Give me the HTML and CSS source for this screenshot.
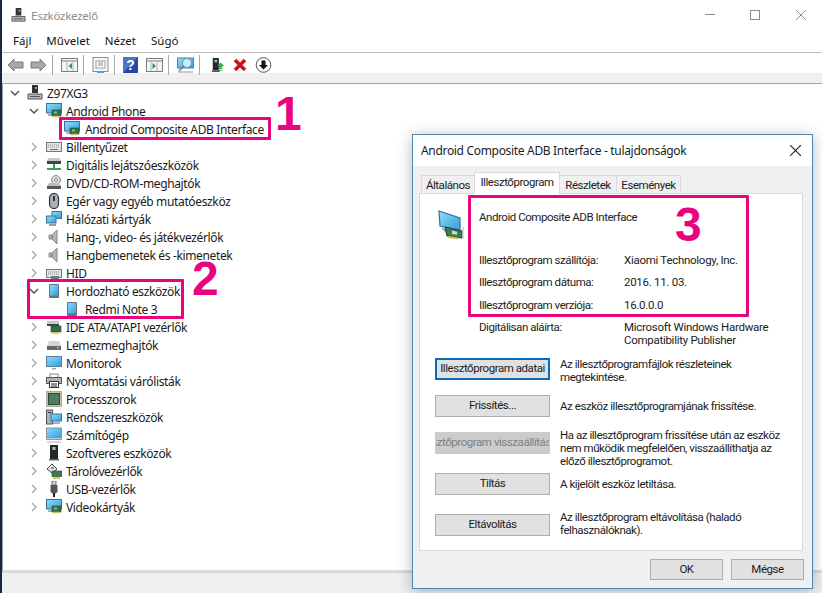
FILE: index.html
```html
<!DOCTYPE html>
<html lang="hu">
<head>
<meta charset="utf-8">
<title>Eszközkezelő</title>
<link rel="stylesheet" href="styles.css">
</head>
<body>
<svg class="defs" width="0" height="0" aria-hidden="true">
  <defs>
    <linearGradient id="blue" x1="0" y1="0" x2="1" y2="1"><stop offset="0" stop-color="#8fdcff"/><stop offset="1" stop-color="#2f9fdc"/></linearGradient>
    <symbol id="down" viewBox="0 0 10 10"><path d="M1 3l4 4 4-4" fill="none" stroke="#4d4d4d" stroke-width="1.4"/></symbol>
    <symbol id="right" viewBox="0 0 10 10"><path d="M3 1l4 4-4 4" fill="none" stroke="#a8a8a8" stroke-width="1.4"/></symbol>
    <symbol id="computer" viewBox="0 0 16 16"><rect x="5" y="0" width="6" height="8" fill="#333"/><rect x="8" y="2" width="2" height="2" fill="#6fbf5f"/><path d="M1 9h14v5H1z" fill="#b9b9b9" stroke="#555"/><rect x="3" y="11" width="10" height="1" fill="#555"/></symbol>
    <symbol id="netcard" viewBox="0 0 16 16"><rect x=".5" y=".5" width="15" height="9.5" fill="url(#blue)" stroke="#41708f"/><path d="M2 12h5" stroke="#8a9aa5" stroke-width="1.5"/><rect x="6" y="7" width="9" height="6" fill="#2f6f4a" stroke="#1e4a30" stroke-width=".6"/><rect x="8" y="8.500" width="3" height="2" fill="#88b898"/><path d="M7 13.500h6" stroke="#d8c44a" stroke-width="1.600"/></symbol>
    <symbol id="netcard-big" viewBox="0 0 32 32"><path d="M4 2l21 7v12L5 17z" fill="url(#blue)" stroke="#3f6f8d" stroke-width="1.200"/><path d="M7 19l6 5" stroke="#9aa8b2" stroke-width="2"/><path d="M10 18l17 4v7l-15-2z" fill="#3f7a58" stroke="#223f2f"/><path d="M17 21.500l5 1.200v3l-5-.8z" fill="#c9d9cf"/><path d="M13 28l10 1.500" stroke="#d8c44a" stroke-width="2"/><path d="M28 18v12" stroke="#c5ccd2" stroke-width="1.500"/></symbol>
    <symbol id="keyboard" viewBox="0 0 16 16"><rect x=".5" y="3.500" width="15" height="9" fill="#e4e4e4" stroke="#777"/><path d="M2 6h12M2 8h12" stroke="#8f8f8f" stroke-dasharray="1 1"/><path d="M4 10.500h8" stroke="#777"/></symbol>
    <symbol id="media" viewBox="0 0 16 16"><path d="M2 1h12l1 3H1z" fill="#c9c9c9"/><rect x="1" y="4" width="14" height="3" fill="#444"/><rect x="7" y="7" width="2" height="4" fill="#3aa24b"/><rect x="1" y="11" width="14" height="2" fill="#3aa24b"/></symbol>
    <symbol id="dvd" viewBox="0 0 16 16"><circle cx="10" cy="5" r="4.500" fill="#dcdcdc" stroke="#8a8a8a"/><circle cx="10" cy="5" r="1.500" fill="#fff" stroke="#8a8a8a"/><path d="M3 8h10l2 3H1z" fill="#bdbdbd"/><rect x="1" y="11" width="14" height="3" fill="#555"/></symbol>
    <symbol id="mouse" viewBox="0 0 16 16"><rect x="3.500" y=".5" width="9" height="15" rx="4.500" fill="#a9b1b8" stroke="#333" stroke-width="1.200"/><rect x="7" y="3" width="2" height="5" fill="#33373b"/></symbol>
    <symbol id="network" viewBox="0 0 16 16"><rect x="6" y=".5" width="9.500" height="7" fill="url(#blue)" stroke="#41708f"/><rect x=".5" y="5" width="9.500" height="7" fill="url(#blue)" stroke="#41708f"/><path d="M3 14h7" stroke="#6d7f8c" stroke-width="1.500"/></symbol>
    <symbol id="speaker" viewBox="0 0 16 16"><path d="M3 6h3l5-5v14l-5-5H3z" fill="#b5b5b5" stroke="#8a8a8a"/><path d="M6 6.500v3" stroke="#666"/></symbol>
    <symbol id="hid" viewBox="0 0 16 16"><rect x=".5" y="4.500" width="15" height="8" fill="#e4e4e4" stroke="#777"/><path d="M2 7h12M2 9h12" stroke="#8f8f8f" stroke-dasharray="1 1"/><rect x="5" y="11" width="8" height="4" fill="#6b7a88"/></symbol>
    <symbol id="phone" viewBox="0 0 16 16"><rect x="3" y="1" width="10" height="14" rx="1" fill="#66727c"/><rect x="4" y="2" width="8" height="10.500" fill="url(#blue)"/></symbol>
    <symbol id="ide" viewBox="0 0 16 16"><rect x="1" y="2" width="12" height="4" fill="#c9c9c9"/><rect x="1" y="5" width="12" height="2" fill="#444"/><rect x="5" y="7" width="10" height="6" fill="#2f6f4a" stroke="#1e4a30" stroke-width=".6"/><path d="M6 14h7" stroke="#d8c44a" stroke-width="1.600"/></symbol>
    <symbol id="disk" viewBox="0 0 16 16"><path d="M3 4h10l2 5H1z" fill="#d4d4d4"/><rect x="1" y="9" width="14" height="4" fill="#666"/><rect x="11" y="10" width="2" height="1.500" fill="#6fe06f"/></symbol>
    <symbol id="monitor" viewBox="0 0 16 16"><rect x=".5" y="1.500" width="15" height="10" fill="url(#blue)" stroke="#5b7f98"/><path d="M6 13h4v1.500H6z" fill="#9aa8b2"/></symbol>
    <symbol id="printer" viewBox="0 0 16 16"><rect x="4" y="1" width="8" height="4" fill="#fff" stroke="#888"/><rect x=".5" y="4.500" width="15" height="6" fill="#aeb4b8" stroke="#555"/><rect x="3.500" y="8.500" width="9" height="6" fill="#fff" stroke="#333"/><path d="M5 11h6M5 13h6" stroke="#222"/></symbol>
    <symbol id="cpu" viewBox="0 0 16 16"><rect x=".5" y=".5" width="15" height="15" fill="#c9c28f" stroke="#777" stroke-dasharray="1 1"/><rect x="2.500" y="2.500" width="11" height="11" fill="#4e7b62" stroke="#2c4a3a"/></symbol>
    <symbol id="system" viewBox="0 0 16 16"><rect x=".5" y="1" width="6" height="14" fill="#aeb4b8" stroke="#555"/><rect x="2" y="3" width="3" height="1" fill="#333"/><rect x="5" y="5" width="10.500" height="7" fill="url(#blue)" stroke="#41708f"/><path d="M7 14h7" stroke="#8a9aa5" stroke-width="1.500"/></symbol>
    <symbol id="pc" viewBox="0 0 16 16"><rect x=".5" y="1" width="15" height="10" fill="url(#blue)" stroke="#7b97aa"/><path d="M0 12.500h16" stroke="#8f9ca6"/><path d="M1 15h14" stroke="#b7c0c6" stroke-width="1.200"/></symbol>
    <symbol id="tower" viewBox="0 0 16 16"><rect x="4" y="0" width="8" height="14" fill="#24282b"/><rect x="6.500" y="2" width="3" height="3" fill="#8fd08a"/><rect x="3" y="14" width="10" height="1.500" fill="#666"/></symbol>
    <symbol id="storage" viewBox="0 0 16 16"><path d="M1 6l5-5 5 5-5 4z" fill="#e6e6e6" stroke="#444"/><path d="M5 5h3" stroke="#444"/><rect x="6" y="8" width="10" height="5.500" fill="#3c7a55" stroke="#1e4a30" stroke-width=".6"/><path d="M7 15h7" stroke="#d8c44a" stroke-width="1.800"/></symbol>
    <symbol id="usb" viewBox="0 0 16 16"><rect x="6" y="0" width="4" height="4" fill="#d8d8d8" stroke="#555" stroke-width=".8"/><path d="M4.500 4h7v7l-2 1.500h-3l-2-1.500z" fill="#55595c"/><rect x="7" y="12" width="2" height="4" fill="#222"/></symbol>
    <symbol id="prev" viewBox="0 0 17 14"><path d="M1 7l6-6v3h9v6H7v3z" fill="#a8a8a8" stroke="#7d7d7d"/></symbol>
    <symbol id="next" viewBox="0 0 17 14"><path d="M16 7l-6-6v3H1v6h9v3z" fill="#a8a8a8" stroke="#7d7d7d"/></symbol>
    <symbol id="tree-left" viewBox="0 0 17 14"><rect x=".5" y=".5" width="16" height="13" fill="#f4f4f4" stroke="#7d7d7d"/><path d="M1 3h15" stroke="#7d7d7d"/><path d="M6 3v10M12 3v10" stroke="#b5b5b5"/><path d="M11 5v6L7.500 8z" fill="#2f9b46"/></symbol>
    <symbol id="sheet" viewBox="0 0 17 16"><rect x="1" y=".5" width="15" height="14" fill="#f7f7f7" stroke="#8d8d8d"/><rect x="4" y="4" width="9" height="7" fill="#fff" stroke="#9a9a9a"/><path d="M6 6h5M6 8h5" stroke="#8d8d8d"/><rect x="5" y="14" width="7" height="2" fill="#49a7de"/></symbol>
    <symbol id="help" viewBox="0 0 15 16"><rect width="15" height="16" fill="#2a47a8"/><path d="M0 0h15L0 16z" fill="#4e73cf"/></symbol>
    <symbol id="tree-right" viewBox="0 0 17 14"><rect x=".5" y=".5" width="16" height="13" fill="#f4f4f4" stroke="#7d7d7d"/><path d="M1 3h15" stroke="#7d7d7d"/><path d="M5 3v10M11 3v10" stroke="#b5b5b5"/><path d="M6.500 5v6L10 8z" fill="#2f9b46"/></symbol>
    <symbol id="scan" viewBox="0 0 17 16"><rect x=".5" y="1" width="16" height="10" fill="url(#blue)" stroke="#5b7f98"/><path d="M1 15h15" stroke="#8f9ca6"/><circle cx="10" cy="6" r="4.500" fill="#c9ecfb" stroke="#7895a8"/><path d="M7 9l-5 5" stroke="#6f7a82" stroke-width="1.500"/></symbol>
    <symbol id="update" viewBox="0 0 16 16"><rect x="2" y="0" width="7" height="14" fill="#24282b"/><rect x="4" y="2" width="3" height="3" fill="#8fd08a"/><rect x="1" y="14" width="9" height="2" fill="#555"/><path d="M11 5l4 4h-2v2H9V9H7z" fill="#2fb34c"/><path d="M9 12h4M9 14h4" stroke="#2fb34c" stroke-width="1.200"/></symbol>
    <symbol id="remove" viewBox="0 0 14 14"><path d="M2 2l10 10M12 2L2 12" stroke="#c4161c" stroke-width="3.600"/></symbol>
    <symbol id="install" viewBox="0 0 16 16"><circle cx="8" cy="8" r="7.300" fill="#fff" stroke="#555"/><path d="M6 3.500h4V8h2.500L8 12.500 3.500 8H6z" fill="#111"/></symbol>
  </defs>
</svg>

<div class="app">
  <header class="titlebar">
    <svg class="title-icon"><use href="#computer"/></svg>
    <span class="title-text">Eszközkezelő</span>
    <div class="controls">
      <span class="ctl-min"></span>
      <span class="ctl-max"></span>
      <svg class="ctl-close" viewBox="0 0 10 10"><path d="M0 0l10 10M10 0L0 10" stroke="#8d8d8d"/></svg>
    </div>
  </header>
  <nav class="menu">
    <span>Fájl</span><span>Művelet</span><span>Nézet</span><span>Súgó</span>
  </nav>
  <div class="toolbar">
    <svg class="tool"><use href="#prev"/></svg>
    <svg class="tool"><use href="#next"/></svg>
    <i class="sep"></i>
    <svg class="tool"><use href="#tree-left"/></svg>
    <i class="sep"></i>
    <svg class="tool"><use href="#sheet"/></svg>
    <i class="sep"></i>
    <span class="help"><svg class="help-bg"><use href="#help"/></svg><b class="help-q">?</b></span>
    <svg class="tool"><use href="#tree-right"/></svg>
    <i class="sep"></i>
    <svg class="tool"><use href="#scan"/></svg>
    <i class="sep"></i>
    <svg class="tool tool-up"><use href="#update"/></svg>
    <svg class="tool tool-x"><use href="#remove"/></svg>
    <svg class="tool"><use href="#install"/></svg>
  </div>
  <main class="tree">
    <div class="row d0"><svg class="chev"><use href="#down"/></svg><svg class="ic"><use href="#computer"/></svg><span>Z97XG3</span></div>
    <div class="row d1"><svg class="chev"><use href="#down"/></svg><svg class="ic"><use href="#netcard"/></svg><span>Android Phone</span></div>
    <div class="row d2"><svg class="ic"><use href="#netcard"/></svg><span>Android Composite ADB Interface</span></div>
    <div class="row d1"><svg class="chev"><use href="#right"/></svg><svg class="ic"><use href="#keyboard"/></svg><span>Billentyűzet</span></div>
    <div class="row d1"><svg class="chev"><use href="#right"/></svg><svg class="ic"><use href="#media"/></svg><span>Digitális lejátszóeszközök</span></div>
    <div class="row d1"><svg class="chev"><use href="#right"/></svg><svg class="ic"><use href="#dvd"/></svg><span>DVD/CD-ROM-meghajtók</span></div>
    <div class="row d1"><svg class="chev"><use href="#right"/></svg><svg class="ic"><use href="#mouse"/></svg><span>Egér vagy egyéb mutatóeszköz</span></div>
    <div class="row d1"><svg class="chev"><use href="#right"/></svg><svg class="ic"><use href="#network"/></svg><span>Hálózati kártyák</span></div>
    <div class="row d1"><svg class="chev"><use href="#right"/></svg><svg class="ic"><use href="#speaker"/></svg><span>Hang-, video- és játékvezérlők</span></div>
    <div class="row d1"><svg class="chev"><use href="#right"/></svg><svg class="ic"><use href="#speaker"/></svg><span>Hangbemenetek és -kimenetek</span></div>
    <div class="row d1"><svg class="chev"><use href="#right"/></svg><svg class="ic"><use href="#hid"/></svg><span>HID</span></div>
    <div class="row d1"><svg class="chev"><use href="#down"/></svg><svg class="ic"><use href="#phone"/></svg><span>Hordozható eszközök</span></div>
    <div class="row d2"><svg class="ic"><use href="#phone"/></svg><span>Redmi Note 3</span></div>
    <div class="row d1"><svg class="chev"><use href="#right"/></svg><svg class="ic"><use href="#ide"/></svg><span>IDE ATA/ATAPI vezérlők</span></div>
    <div class="row d1"><svg class="chev"><use href="#right"/></svg><svg class="ic"><use href="#disk"/></svg><span>Lemezmeghajtók</span></div>
    <div class="row d1"><svg class="chev"><use href="#right"/></svg><svg class="ic"><use href="#monitor"/></svg><span>Monitorok</span></div>
    <div class="row d1"><svg class="chev"><use href="#right"/></svg><svg class="ic"><use href="#printer"/></svg><span>Nyomtatási várólisták</span></div>
    <div class="row d1"><svg class="chev"><use href="#right"/></svg><svg class="ic"><use href="#cpu"/></svg><span>Processzorok</span></div>
    <div class="row d1"><svg class="chev"><use href="#right"/></svg><svg class="ic"><use href="#system"/></svg><span>Rendszereszközök</span></div>
    <div class="row d1"><svg class="chev"><use href="#right"/></svg><svg class="ic"><use href="#pc"/></svg><span>Számítógép</span></div>
    <div class="row d1"><svg class="chev"><use href="#right"/></svg><svg class="ic"><use href="#tower"/></svg><span>Szoftveres eszközök</span></div>
    <div class="row d1"><svg class="chev"><use href="#right"/></svg><svg class="ic"><use href="#storage"/></svg><span>Tárolóvezérlők</span></div>
    <div class="row d1"><svg class="chev"><use href="#right"/></svg><svg class="ic"><use href="#usb"/></svg><span>USB-vezérlők</span></div>
    <div class="row d1"><svg class="chev"><use href="#right"/></svg><svg class="ic"><use href="#netcard"/></svg><span>Videokártyák</span></div>
  </main>
  <footer class="status"></footer>
</div>

<section class="dialog">
  <header class="dlg-title">
    <span>Android Composite ADB Interface - tulajdonságok</span>
    <svg class="dlg-close" viewBox="0 0 10 10"><path d="M0 0l10 10M10 0L0 10" stroke="#222"/></svg>
  </header>
  <div class="dlg-body">
    <div class="tabs">
      <span class="tab tab-a">Általános</span>
      <span class="tab tab-on">Illesztőprogram</span>
      <span class="tab tab-b">Részletek</span>
      <span class="tab tab-c">Események</span>
    </div>
    <div class="panel">
      <div class="head">
        <svg class="dev-icon"><use href="#netcard-big"/></svg>
        <span class="dev-name">Android Composite ADB Interface</span>
      </div>
      <dl class="props">
        <dt>Illesztőprogram szállítója:</dt><dd>Xiaomi Technology, Inc.</dd>
        <dt>Illesztőprogram dátuma:</dt><dd>2016. 11. 03.</dd>
        <dt>Illesztőprogram verziója:</dt><dd>16.0.0.0</dd>
        <dt>Digitálisan aláírta:</dt><dd>Microsoft Windows Hardware<br>Compatibility Publisher</dd>
      </dl>
      <div class="act r37"><div class="btn btn-focus">Illesztőprogram adatai</div><p class="desc">Az illesztőprogramfájlok részleteinek<br>megtekintése.</p></div>
      <div class="act r37"><div class="btn">Frissítés...</div><p class="desc m5">Az eszköz illesztőprogramjának frissítése.</p></div>
      <div class="act r41"><div class="btn btn-off">Illesztőprogram visszaállítása</div><p class="desc up3">Ha az illesztőprogram frissítése után az eszköz<br>nem működik megfelelően, visszaállíthatja az<br>előző illesztőprogramot.</p></div>
      <div class="act r41"><div class="btn">Tiltás</div><p class="desc m5">A kijelölt eszköz letiltása.</p></div>
      <div class="act"><div class="btn">Eltávolítás</div><p class="desc up3">Az illesztőprogram eltávolítása (haladó<br>felhasználóknak).</p></div>
    </div>
    <div class="dlg-foot">
      <div class="btn btn-foot">OK</div>
      <div class="btn btn-foot">Mégse</div>
    </div>
  </div>
</section>

<div class="mark mark-1"></div>
<div class="mark mark-2"></div>
<div class="mark mark-3"></div>
<b class="num num-1">1</b>
<b class="num num-2">2</b>
<b class="num num-3">3</b>
</body>
</html>
```

FILE: styles.css
```css
* { box-sizing: border-box; }
html, body { margin: 0; padding: 0; }
body {
  position: relative;
  width: 822px;
  height: 593px;
  overflow: hidden;
  background: #fff;
  font-family: "Noto Sans", "Open Sans", sans-serif;
  font-size: 11.5px;
  color: #1c1c1c;
}
.defs { position: absolute; }
.app {
  display: flex;
  flex-direction: column;
  width: 822px;
  height: 593px;
  border-left: 2px solid #17283c;
}
.titlebar {
  display: flex;
  align-items: center;
  height: 30px;
  flex: none;
  padding-left: 9px;
}
.title-icon { width: 15px; height: 15px; }
.title-text { margin-left: 5px; color: #8e8e8e; letter-spacing: -.25px; }
.controls { margin-left: auto; display: flex; align-items: center; padding-right: 16px; }
.ctl-min { width: 10px; height: 1px; background: #8d8d8d; margin-top: -1px; }
.ctl-max { width: 10px; height: 10px; border: 1px solid #8d8d8d; margin-left: 35px; }
.ctl-close { width: 10px; height: 10px; margin-left: 36px; }
.menu {
  display: flex;
  align-items: center;
  gap: 15px;
  height: 23px;
  flex: none;
  padding: 0 0 2px 11px;
  border-bottom: 1px solid #bcbcbc;
  color: #111;
}
.toolbar {
  display: flex;
  align-items: center;
  gap: 6px;
  height: 30px;
  flex: none;
  padding: 0 0 6px 5px;
  background: linear-gradient(#fff 0 20px, #f0f0f0 20px);
}
.tool { width: 17px; height: 16px; flex: none; }
.tool-up { margin-left: 3px; width: 14px; margin-right: 1px; }
.tool-x { width: 14px; height: 14px; margin-left: 1px; margin-right: 2px; }
.sep { width: 1px; height: 20px; background: #a8a8a8; margin: 0 2px 0 -1px; flex: none; }
.help { position: relative; display: block; width: 15px; height: 16px; margin: 0 2px 0 0; flex: none; }
.help-bg { width: 15px; height: 16px; display: block; }
.help-q {
  position: absolute; inset: 0; text-align: center; color: #fff;
  font: bold 14px/16px "Liberation Sans", sans-serif;
}
.tree {
  flex: 1;
  background: #fff;
  border-top: 1px solid #a5a5a5;
  border-left: 1px solid #9a9a9a;
  border-bottom: 2px solid #dcdcdc;
  font-size: 12px;
  letter-spacing: -.36px;
}
.row { display: flex; align-items: center; height: 18px; white-space: nowrap; color: #1a1a1a; }
.d0 { padding-left: 7px; }
.d1 { padding-left: 26px; }
.d2 { padding-left: 61px; }
.chev { width: 10px; height: 10px; flex: none; margin-right: 7px; }
.ic { width: 16px; height: 16px; flex: none; margin-right: 4px; }
.d2 .ic { margin-right: 5px; }
.status { height: 21px; flex: none; background: #efefef; border-top: 1px solid #d6d6d6; }

.dialog {
  position: absolute;
  left: 412px;
  top: 134px;
  width: 401px;
  height: 455px;
  display: flex;
  flex-direction: column;
  border: 1px solid #4f86b5;
  background: #f0f0f0;
  box-shadow: 0 2px 14px rgba(0, 0, 0, .28);
  font-family: Roboto, "Noto Sans", sans-serif;
  font-size: 11.5px;
  letter-spacing: -.45px;
}
.dlg-title {
  display: flex;
  align-items: center;
  justify-content: space-between;
  height: 31px;
  flex: none;
  background: #fff;
  padding: 0 11px 1px 8px;
  font-family: "Noto Sans", sans-serif;
  font-size: 12px;
  letter-spacing: -.32px;
}
.dlg-close { width: 11px; height: 11px; }
.dlg-body { flex: 1; display: flex; flex-direction: column; padding: 6px 9px 0 6px; }
.tabs { display: flex; height: 21px; flex: none; align-items: flex-end; padding-left: 2px; position: relative; z-index: 1; }
.tab {
  display: flex; align-items: center; justify-content: center;
  height: 18px;
  border: 1px solid #d9d9d9;
  border-bottom: 0;
  background: #f0f0f0;
  margin-right: -1px;
}
.tab-a { width: 54px; }
.tab-on { width: 86px; height: 22px; background: #fff; padding-bottom: 3px; margin-bottom: -1px; }
.tab-b { width: 58px; }
.tab-c { width: 65px; }
.panel {
  height: 358px;
  flex: none;
  padding: 15px 0 0 15px;
  background: #fff;
  border: 1px solid #d9d9d9;
}
.head { display: flex; align-items: flex-start; height: 44px; }
.dev-icon { width: 32px; height: 32px; flex: none; }
.dev-name { margin: 1px 0 0 12px; line-height: 14px; }
.props {
  display: grid;
  grid-template-columns: 145px 178px;
  grid-auto-rows: 22.3px;
  margin: 0 0 0 44px;
  padding-top: 1px;
  height: 105px;
  line-height: 13px;
}
.props dt, .props dd { margin: 0; }
.props dd { letter-spacing: -.28px; }
.act { display: flex; gap: 10px; }
.r37 { height: 37px; }
.r41 { height: 41px; }
.btn {
  display: flex; align-items: center; justify-content: center;
  width: 115px; height: 22px; flex: none;
  white-space: nowrap; overflow: hidden;
  background: #e1e1e1;
  border: 1px solid #adadad;
  padding-bottom: 2px;
}
.btn-focus { border: 2px solid #0a6cb8; }
.btn-off { background: #cccccc; border-color: #cccccc; color: #808080; padding-right: 10px; }
.desc { margin: 0; line-height: 13px; white-space: nowrap; }
.m5 { margin-top: 5px; }
.up3 { margin-top: -3px; }
.dlg-foot { display: flex; justify-content: flex-end; gap: 8px; padding: 8px 0 0 0; margin-right: -1px; }
.btn-foot { width: 73px; height: 21px; }

.mark {
  position: absolute;
  border: 3px solid #e9047f;
  border-radius: 1px;
}
.mark-1 { left: 59px; top: 117px; width: 212px; height: 23px; }
.mark-2 { left: 27px; top: 279px; width: 157px; height: 40px; }
.mark-3 { left: 468px; top: 195px; width: 281px; height: 122px; }
.num {
  position: absolute;
  color: #e9047f;
  font: bold 48px/36px "Liberation Sans", sans-serif;
}
.num-1 { left: 275px; top: 96px; }
.num-2 { left: 192px; top: 261px; }
.num-3 { left: 675px; top: 207px; }
```
